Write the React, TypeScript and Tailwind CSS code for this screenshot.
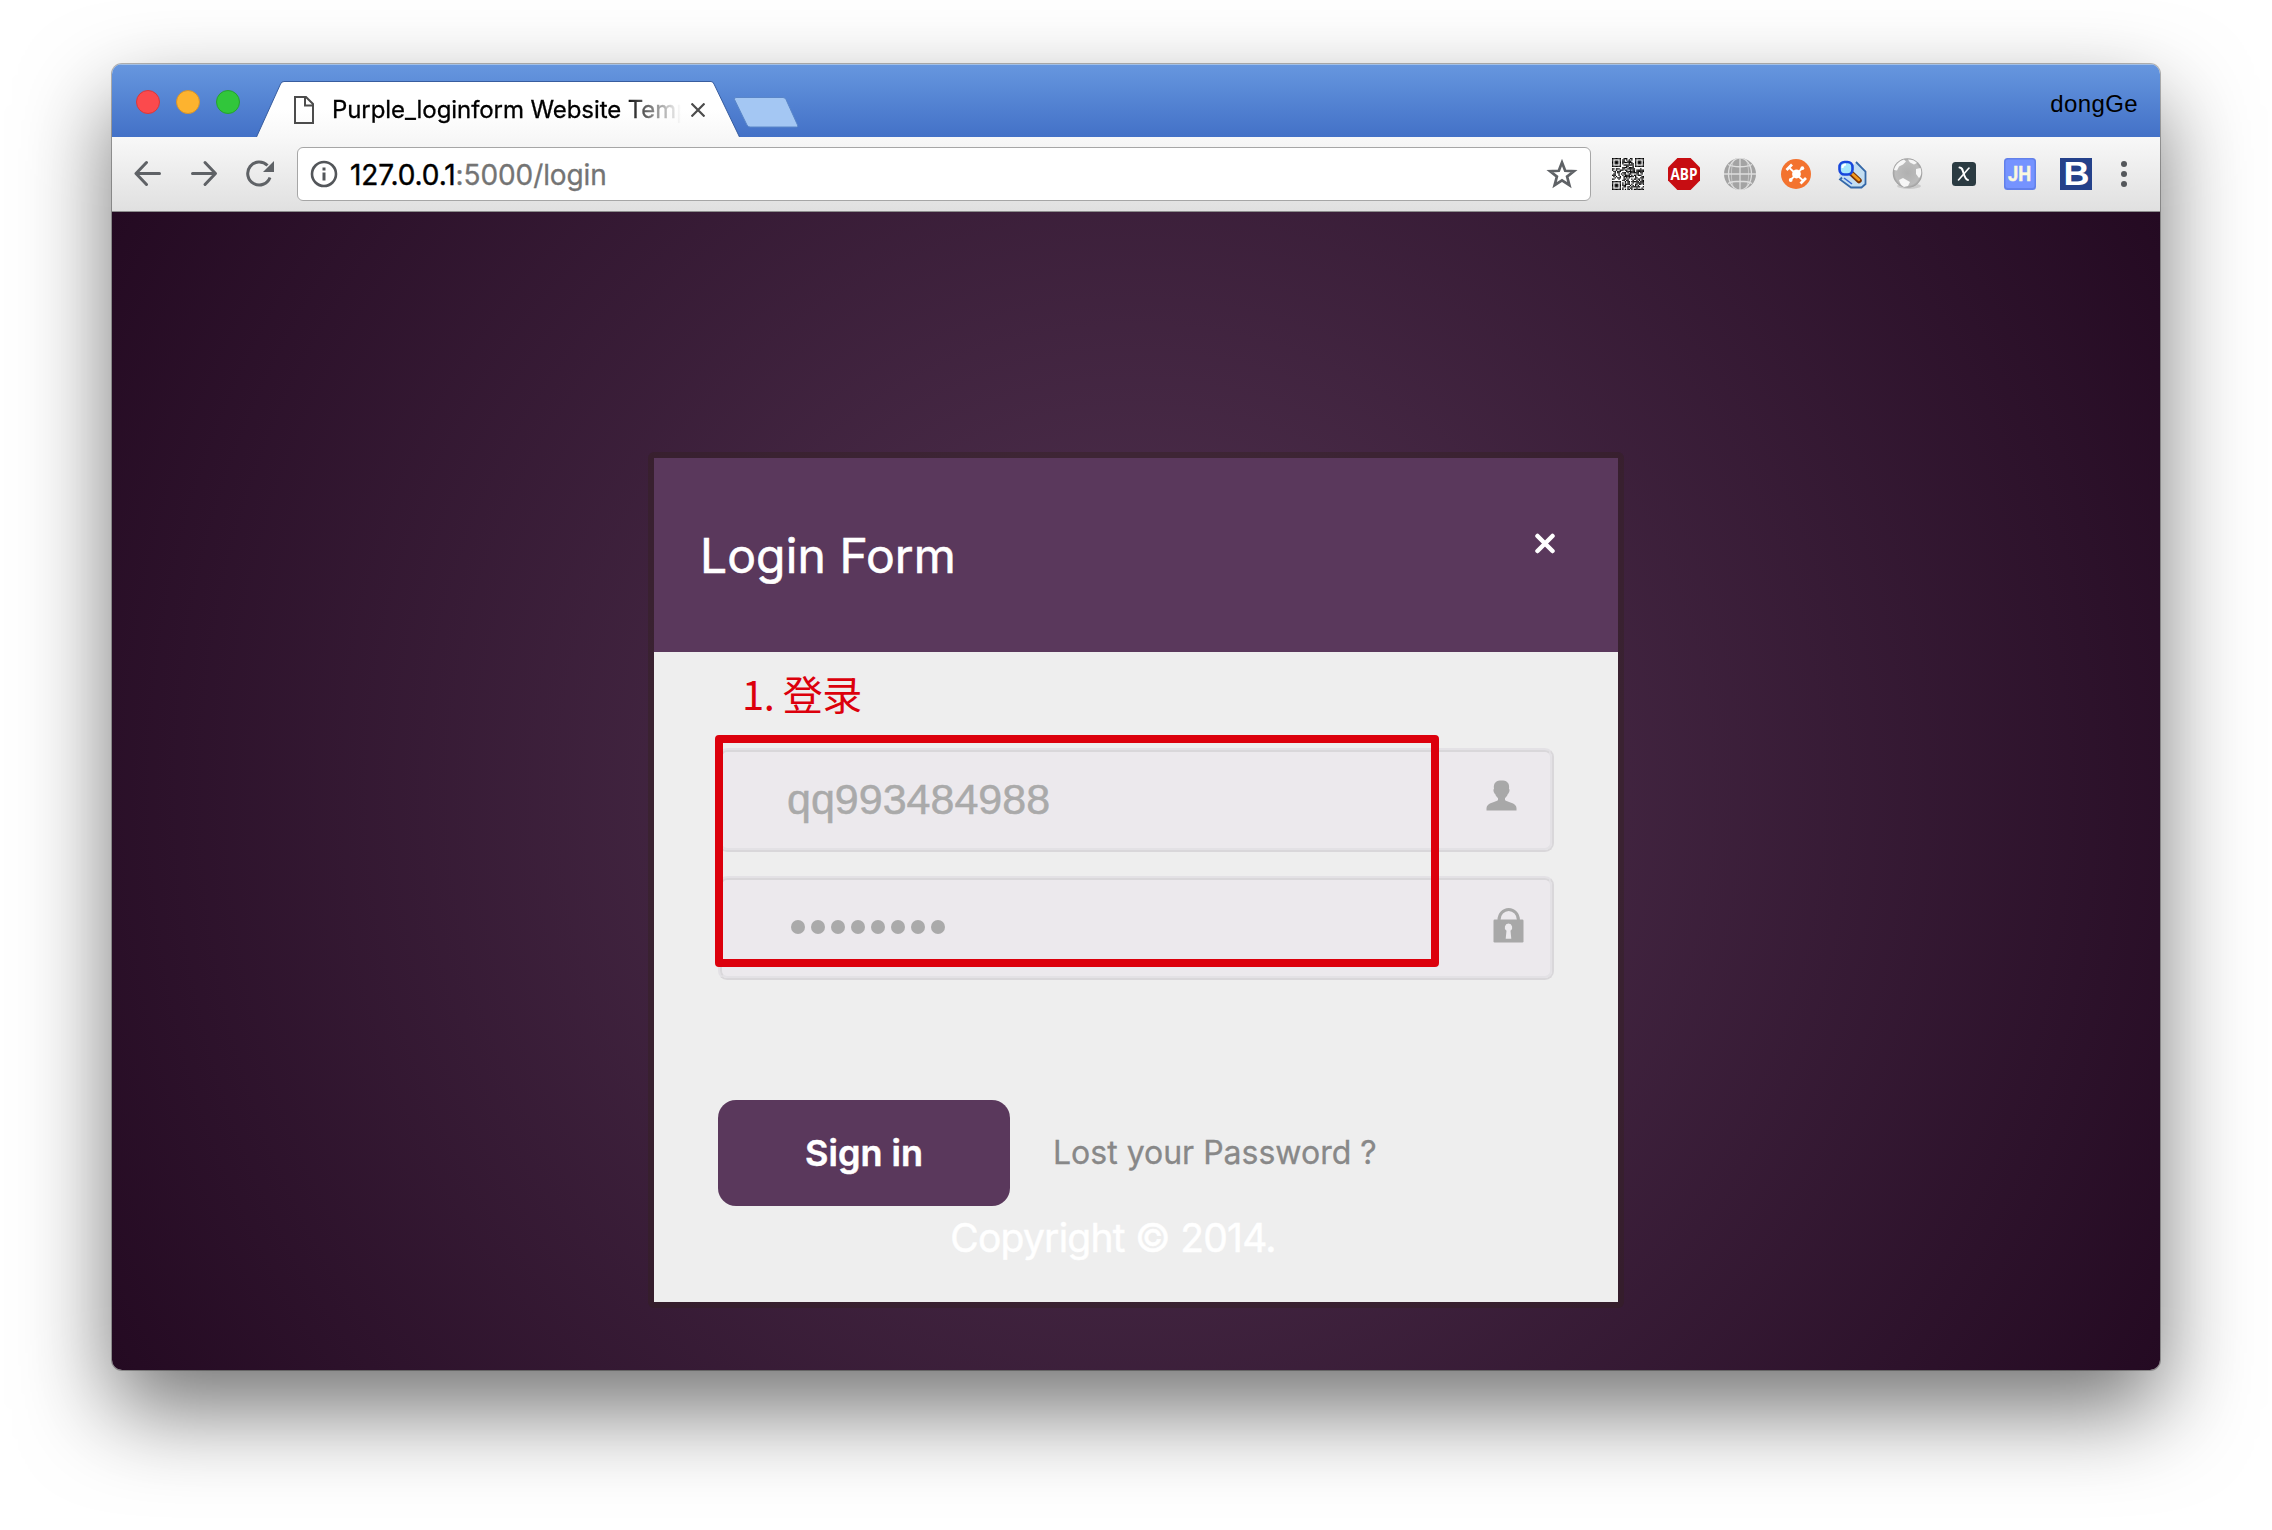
import React from "react";

const QR_SIZE = 25;

function isFinder(x: number, y: number): boolean | null {
  const corners = [[0, 0], [QR_SIZE - 7, 0], [0, QR_SIZE - 7]];
  for (const [cx, cy] of corners) {
    const dx = x - cx;
    const dy = y - cy;
    if (dx >= -1 && dx <= 7 && dy >= -1 && dy <= 7) {
      const ring = Math.max(Math.abs(dx - 3), Math.abs(dy - 3));
      return ring === 3 || ring <= 1;
    }
  }
  return null;
}

function QrIcon() {
  const cells: React.ReactNode[] = [];
  let seed = 41;
  for (let y = 0; y < QR_SIZE; y++) {
    for (let x = 0; x < QR_SIZE; x++) {
      seed = (seed * 1103515245 + 12345) % 2147483648;
      const finder = isFinder(x, y);
      const dark = finder === null ? seed / 2147483648 > 0.42 : finder;
      if (dark) cells.push(<rect key={`${x}-${y}`} x={x} y={y} width="1.02" height="1.02" />);
    }
  }
  return (
    <svg className="size-8" viewBox="0 0 25 25">
      <rect width="25" height="25" fill="#fff" />
      <g fill="#000">{cells}</g>
    </svg>
  );
}

function AbpIcon() {
  return (
    <svg className="size-8" viewBox="0 0 32 32">
      <path d="M9.4 0h13.2L32 9.4v13.2L22.6 32H9.4L0 22.6V9.4z" fill="#c70d12" />
      <text x="16" y="22" textAnchor="middle" textLength="27" lengthAdjust="spacingAndGlyphs" fontFamily="Open Sans" fontWeight="700" fontSize="16.500" fill="#fff">ABP</text>
    </svg>
  );
}

function GlobeIcon() {
  return (
    <svg className="size-8" viewBox="0 0 32 32">
      <circle cx="16" cy="16" r="16" fill="#a3a3a3" />
      <g fill="none" stroke="#dedede" strokeWidth="1.3">
        <path d="M16 0v32M0 16h32M4 6.5c5 3 19 3 24 0M4 25.500c5-3 19-3 24 0" />
        <ellipse cx="16" cy="16" rx="11.500" ry="16" />
        <path d="M10 1c-3.500 9-3.500 21 0 30M22 1c3.500 9 3.500 21 0 30" strokeWidth=".6" />
      </g>
    </svg>
  );
}

function DroneIcon() {
  return (
    <svg className="size-8" viewBox="0 0 32 32">
      <circle cx="16" cy="16" r="15" fill="#f3732f" />
      <circle cx="16.500" cy="16" r="4.400" fill="#fff" />
      <g stroke="#fff" strokeWidth="1.800" fill="none">
        <path d="M9 9.500L23.500 23M22 10.500L11 21.500" />
        <path d="M6.500 12l5.500-5.500M20.500 25.500L26 20" strokeWidth="2.800" />
      </g>
      <circle cx="22.300" cy="10.200" r="1.900" fill="#fff" />
      <circle cx="10.700" cy="22" r="1.900" fill="#fff" />
    </svg>
  );
}

function SearchBoxIcon() {
  return (
    <svg className="size-8" viewBox="0 0 32 32">
      <path d="M3 17l12-6 5-7 9.500 9.500V26l-4 3.500H15L4 22z" fill="#c3def2" />
      <path d="M20 4l9.500 9.500V26l-4 3.500H15L4 21.500l2-2" fill="none" stroke="#3568a8" strokeWidth="1.800" />
      <path d="M8 20l8 6" stroke="#2f62cf" strokeWidth="1.500" />
      <path d="M16 16l7 6.500" stroke="#7d3606" strokeWidth="5.500" strokeLinecap="round" />
      <path d="M16.500 16l6.500 6" stroke="#f49a1c" strokeWidth="2.500" strokeLinecap="round" />
      <rect x="3.500" y="4" width="13" height="12.500" rx="5" fill="#a5e6fc" stroke="#1747dc" strokeWidth="2.600" />
      <path d="M6.500 10c0-2 1.500-3.500 3.500-3.500" stroke="#fff" strokeWidth="2" fill="none" />
    </svg>
  );
}

function EarthIcon() {
  return (
    <svg className="size-8" viewBox="0 0 32 32">
      <defs>
        <radialGradient id="earth" cx=".5" cy=".5" r=".55">
          <stop offset="0" stopColor="#b0b0b0" />
          <stop offset=".75" stopColor="#bcbcbc" />
          <stop offset="1" stopColor="#8c8c8c" />
        </radialGradient>
      </defs>
      <ellipse cx="17" cy="28" rx="12" ry="3" fill="#000" opacity=".12" />
      <circle cx="15.500" cy="15" r="14.800" fill="url(#earth)" />
      <g fill="#f6f6f6">
        <path d="M2 12C3 7 7 3 12 1.500l2 2-3 3-4 2-2 4z" />
        <path d="M16 1.500c4 0 7 1 9 3.500l-3 1.500-4-2z" />
        <path d="M24 11l4.500-1c1.500 5 .5 8-1.500 10l-3-4z" />
        <path d="M7 22l4-2 7 4-2 4-4 1c-2-1-4-3-5-7z" />
      </g>
    </svg>
  );
}

function XIcon() {
  return (
    <svg className="size-8" viewBox="0 0 32 32">
      <rect x="4" y="4" width="24" height="24" rx="3.500" fill="#2b3b42" />
      <g fill="none" stroke="#fff" strokeLinecap="round">
        <path d="M11.500 9.500c2.500 0 3 2 4 5.500s2 6.500 4.500 7" strokeWidth="2" />
        <path d="M21 10L10.500 22" strokeWidth="1.600" />
      </g>
    </svg>
  );
}

function JhIcon() {
  return (
    <svg className="size-8" viewBox="0 0 32 32">
      <rect width="32" height="32" rx="3.500" fill="#6280ea" />
      <rect x="1.500" y="1.500" width="29" height="28.500" rx="2.500" fill="#7593ff" />
      <text x="15.500" y="23" textAnchor="middle" textLength="23" lengthAdjust="spacingAndGlyphs" fontFamily="Roboto" fontWeight="700" fontSize="20" fill="#f9f8df" stroke="#f9f8df" strokeWidth=".5">JH</text>
    </svg>
  );
}

function BIcon() {
  return (
    <svg className="size-8 overflow-visible" viewBox="0 0 32 32">
      <rect width="32" height="32" fill="#24418a" />
      <text x="16.500" y="27" textAnchor="middle" textLength="26" lengthAdjust="spacingAndGlyphs" fontFamily="Liberation Sans" fontWeight="700" fontSize="32.500" fill="#fff">B</text>
    </svg>
  );
}

function TitleBar() {
  return (
    <div className="relative flex h-[73px] shrink-0 bg-linear-to-b from-[#6797df] to-[#4371c7] shadow-[inset_0_1px_0_#a3c0e6]">
      <div className="flex gap-4 pt-[26px] pl-6">
        <span className="size-6 rounded-full border border-[#d9383b] bg-[#fb4a4d]" />
        <span className="size-6 rounded-full border border-[#d6922b] bg-[#fdb32f]" />
        <span className="size-6 rounded-full border border-[#25a22f] bg-[#31c63b]" />
      </div>
      <div className="relative ml-4 flex h-[73px] w-[484px]">
        <svg className="absolute inset-0 h-[73px] w-[484px]" viewBox="0 0 484 73">
          <defs>
            <linearGradient id="tab" x1="0" y1="0" x2="0" y2="1">
              <stop offset="0" stopColor="#fff" />
              <stop offset=".5" stopColor="#fff" />
              <stop offset="1" stopColor="#f8f8f8" />
            </linearGradient>
          </defs>
          <path d="M.5 73L24.500 20q1-2.500 3.500-2.500H455q2 0 3 2.500L483.500 73z" fill="url(#tab)" />
          <path d="M.5 73L24.500 20q1-2.500 3.500-2.500H455q2 0 3 2.500L483.500 73" fill="none" stroke="#385d9f" />
        </svg>
        <svg className="relative mt-8 ml-[38px] h-7 w-5 shrink-0" viewBox="0 0 20 28" fill="none" stroke="#4c4c4c" strokeWidth="2">
          <path d="M1 1h11l7 7v19H1zM11 1v8.500h8" />
        </svg>
        <div className="relative mt-[30px] ml-[18px] h-8 w-[350px] overflow-hidden whitespace-nowrap font-[Inter] text-[24px] leading-8 tracking-[-0.08px] text-black [-webkit-text-stroke:0.3px_#000] [mask-image:linear-gradient(to_right,#000_292px,transparent_349px)]">
          Purple_loginform Website Template
        </div>
        <svg className="relative mt-[39px] ml-[9px] size-[14px] shrink-0" viewBox="0 0 14 14" stroke="#4c4c4c" strokeWidth="2.200">
          <path d="M.5 .5l13 13M13.500 .5l-13 13" />
        </svg>
      </div>
      <svg className="-ml-2 mt-8 h-[33px] w-[68px]" viewBox="0 0 68 33">
        <path d="M4 1.500H51q2 0 3 2L65.500 29q1 2-1 2H18q-2 0-3-2L2.500 3.500q-.5-2 1.500-2z" fill="#a4c7f3" stroke="#5a86c8" />
      </svg>
      <div className="mt-[24px] mr-[22px] ml-auto font-['Liberation_Sans'] text-[24px] leading-8 tracking-[0.4px] text-black">dongGe</div>
    </div>
  );
}

function Toolbar() {
  return (
    <div className="flex h-[75px] shrink-0 items-start border-b border-[#8d8d8d] bg-linear-to-b from-[#f8f8f8] to-[#e0e0e0]">
      <svg className="mt-[23px] ml-[22px] h-7 w-[142px] shrink-0" viewBox="0 0 142 28" fill="none" stroke="#5f6266" strokeWidth="3" strokeLinecap="round" strokeLinejoin="round">
        <path d="M12.500 2.500L2 13.500l10.500 11M3 13.500H25.500" />
        <path d="M71 2.500l10.500 11-10.500 11M80.500 13.500H58.500" />
        <path d="M136 17.500A11.500 11.500 0 1 1 133.500 5.500" strokeLinecap="butt" />
        <path d="M140 1v11h-11z" fill="#5f6266" stroke="none" />
      </svg>
      <div className="mt-[10px] ml-[21px] flex h-[54px] w-[1294px] shrink-0 items-center rounded-[6px] border border-[#a6a6a6] bg-white">
        <svg className="ml-3 size-7 shrink-0" viewBox="0 0 28 28">
          <circle cx="14" cy="14" r="12" fill="none" stroke="#53565a" strokeWidth="2.600" />
          <path d="M12.500 7.500h3v3h-3zM12.500 12.500h3v8h-3z" fill="#53565a" />
        </svg>
        <div className="mt-[2px] ml-3 font-[Inter] text-[28px] leading-8 text-black">
          <span className="tracking-[-0.1px] [-webkit-text-stroke:0.4px_#000]">127.0.0.1</span>
          <span className="tracking-[-0.1px] text-[#747474] [-webkit-text-stroke:0.3px_#747474]">:5000/login</span>
        </div>
        <svg className="mr-3 ml-auto size-8 shrink-0" viewBox="0 0 32 32" fill="none" stroke="#5f6266" strokeWidth="2.700">
          <path d="M16 4.500l3.200 8.300 8.700.4-6.800 5.400 2.300 8.600L16 22.400l-7.400 4.800 2.300-8.600-6.800-5.400 8.700-.4z" />
        </svg>
      </div>
      <div className="mt-[21px] ml-[21px] flex gap-6">
        <QrIcon />
        <AbpIcon />
        <GlobeIcon />
        <DroneIcon />
        <SearchBoxIcon />
        <EarthIcon />
        <XIcon />
        <JhIcon />
        <BIcon />
      </div>
      <div className="mt-[24px] ml-[29px] flex flex-col gap-1">
        <span className="size-[6px] rounded-full bg-[#54575b]" />
        <span className="size-[6px] rounded-full bg-[#54575b]" />
        <span className="size-[6px] rounded-full bg-[#54575b]" />
      </div>
    </div>
  );
}

function Field({ children }: { children: React.ReactNode }) {
  return (
    <div className="h-[104px] rounded-[9px] border-2 border-[#e3e1e5] border-r-[#d9d7da] border-b-[#d9d7da]">
      <div className="flex h-full items-start rounded-[7px] border-2 border-[#d9d7da] border-r-[#e3e1e5] border-b-[#e3e1e5] bg-[#ece9ed]">
        {children}
      </div>
    </div>
  );
}

function LoginForm() {
  return (
    <div className="rounded-[6px] bg-[rgba(51,32,31,0.4)] p-[6px]">
      <div className="h-[844px] w-[964px] bg-[#eee]">
        <div className="flex h-[194px] items-start justify-between bg-[#5a385c]">
          <h1 className="mt-[70px] ml-[46px] font-[Inter] text-[48px] leading-[56px] font-normal tracking-[0.1px] text-white [-webkit-text-stroke:0.6px_#fff]">Login Form</h1>
          <svg className="mt-[74px] mr-[62px] size-[22px]" viewBox="0 0 22 22" stroke="#fff" strokeWidth="4.500" strokeLinecap="round">
            <path d="M3.500 4l15 15M18.500 4l-15 15" />
          </svg>
        </div>
        <div className="relative px-16">
          <div className="h-24 pt-[17px] pl-[24px] font-['Noto_Sans_CJK_SC',sans-serif] text-[40px] leading-[48px] tracking-[-0.5px] text-[#dc000c]">
            1. 登录
          </div>
          <div className="flex flex-col gap-6">
            <Field>
              <div className="mt-[23px] ml-[65px] font-['Liberation_Sans'] text-[43px] leading-[48px] text-[#aaa] [-webkit-text-stroke:0.5px_#aaa]">qq993484988</div>
              <svg className="mt-7 mr-[33px] ml-auto h-[31px] w-[31px]" viewBox="0 0 31 31">
                <path d="M8 9C7 2 11 .5 15.500 .5S24 2 23 9c1.300.3 0 4.500-1.200 5-.6 2-2 3.500-2.800 4v2c1 2 11.500 2.500 11.500 8v2.500H.5V28C.5 22.500 11 22 12 20v-2c-.8-.5-2.200-2-2.800-4C8 13.500 6.700 9.300 8 9z" fill="#a8a8a8" />
              </svg>
            </Field>
            <Field>
              <div className="mt-10 ml-[69px] flex gap-[6px]">
                {Array.from({ length: 8 }, (_, i) => (
                  <span key={i} className="size-[14px] rounded-full bg-[#aaa]" />
                ))}
              </div>
              <svg className="mt-7 mr-[26px] ml-auto h-[35px] w-[31px]" viewBox="0 0 31 35">
                <path d="M6 14v-2a9.700 10.500 0 0 1 19.400 0v2" fill="none" stroke="#a8a8a8" strokeWidth="3" />
                <rect x=".5" y="11.500" width="30" height="23" rx="1.200" fill="#a8a8a8" />
                <path d="M15.500 15.500a4 4 0 0 1 2 7.300l.8 8h-5.600l.8-8a4 4 0 0 1 2-7.300z" fill="#eceaed" />
              </svg>
            </Field>
          </div>
          <div className="absolute top-[83px] left-[61px] h-[232px] w-[724px] rounded-[4px] border-8 border-[#dc000c]" />
          <div className="mt-[120px] flex items-center">
            <button className="h-[106px] w-[292px] rounded-[18px] bg-[#5a385c] font-[Inter] text-[36px] font-semibold text-white [-webkit-text-stroke:0.5px_#fff]">Sign in</button>
            <a className="ml-[43px] font-[Inter] text-[32px] leading-10 text-[#888] [-webkit-text-stroke:0.3px_#888]">Lost your Password ?</a>
          </div>
          <p className="mt-[7px] -ml-[46px] text-center font-[Inter] text-[39px] leading-[50px] tracking-[-0.75px] text-white [-webkit-text-stroke:0.5px_#fff]">Copyright © 2014.</p>
        </div>
      </div>
    </div>
  );
}

export default function App() {
  return (
    <main className="flex h-[1530px] w-[2272px] items-start overflow-hidden bg-white px-28 pt-16">
      <div className="flex h-[1306px] w-[2048px] flex-col rounded-[10px] shadow-[0_0_0_1px_rgba(0,0,0,0.28),0_40px_90px_rgba(0,0,0,0.55)]">
        <div className="flex h-[1306px] flex-col overflow-hidden rounded-[10px]">
          <TitleBar />
          <Toolbar />
          <div className="flex grow items-start justify-center bg-[radial-gradient(circle_at_center,#543553_0%,#240a22_100%)] pt-[240px]">
            <LoginForm />
          </div>
        </div>
      </div>
    </main>
  );
}
